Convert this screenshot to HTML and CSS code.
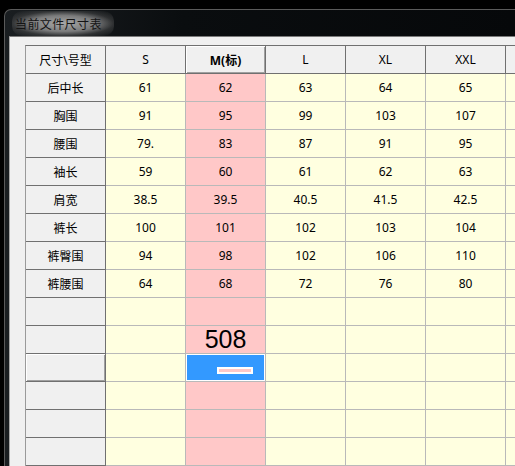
FILE: index.html
```html
<!DOCTYPE html>
<html>
<head>
<meta charset="utf-8">
<link rel="stylesheet" href="styles.css">
</head>
<body>
<div class="window">
  <div class="titlebar"><span class="title">当前文件尺寸表</span></div>
  <div class="client">
    <div class="grid">
      <div class="c h">尺寸\号型</div><div class="c h">S</div><div class="c h hsel b">M(标)</div><div class="c h">L</div><div class="c h">XL</div><div class="c h">XXL</div><div class="c h"></div>

      <div class="c h">后中长</div><div class="c">61</div><div class="c m">62</div><div class="c">63</div><div class="c">64</div><div class="c">65</div><div class="c"></div>
      <div class="c h">胸围</div><div class="c">91</div><div class="c m">95</div><div class="c">99</div><div class="c">103</div><div class="c">107</div><div class="c"></div>
      <div class="c h">腰围</div><div class="c">79.</div><div class="c m">83</div><div class="c">87</div><div class="c">91</div><div class="c">95</div><div class="c"></div>
      <div class="c h">袖长</div><div class="c">59</div><div class="c m">60</div><div class="c">61</div><div class="c">62</div><div class="c">63</div><div class="c"></div>
      <div class="c h">肩宽</div><div class="c">38.5</div><div class="c m">39.5</div><div class="c">40.5</div><div class="c">41.5</div><div class="c">42.5</div><div class="c"></div>
      <div class="c h">裤长</div><div class="c">100</div><div class="c m">101</div><div class="c">102</div><div class="c">103</div><div class="c">104</div><div class="c"></div>
      <div class="c h">裤臀围</div><div class="c">94</div><div class="c m">98</div><div class="c">102</div><div class="c">106</div><div class="c">110</div><div class="c"></div>
      <div class="c h">裤腰围</div><div class="c">64</div><div class="c m">68</div><div class="c">72</div><div class="c">76</div><div class="c">80</div><div class="c"></div>

      <div class="c h"></div><div class="c"></div><div class="c m"></div><div class="c"></div><div class="c"></div><div class="c"></div><div class="c"></div>
      <div class="c h"></div><div class="c"></div><div class="c m big">508</div><div class="c"></div><div class="c"></div><div class="c"></div><div class="c"></div>
      <div class="c h hsel"></div><div class="c"></div><div class="c m cur"><span class="edit"></span></div><div class="c"></div><div class="c"></div><div class="c"></div><div class="c"></div>
      <div class="c h"></div><div class="c"></div><div class="c m"></div><div class="c"></div><div class="c"></div><div class="c"></div><div class="c"></div>
      <div class="c h"></div><div class="c"></div><div class="c m"></div><div class="c"></div><div class="c"></div><div class="c"></div><div class="c"></div>
      <div class="c h"></div><div class="c"></div><div class="c m"></div><div class="c"></div><div class="c"></div><div class="c"></div><div class="c"></div>
      <div class="c h"></div><div class="c"></div><div class="c m"></div><div class="c"></div><div class="c"></div><div class="c"></div><div class="c"></div>
    </div>
  </div>
</div>
</body>
</html>
```
FILE: styles.css
```css
html, body {
  margin: 0;
  padding: 0;
}
body {
  background: #000;
  width: 515px;
  height: 466px;
  overflow: hidden;
  font-family: "Noto Sans", "Noto Sans CJK SC", sans-serif;
  font-size: 12px;
  color: #000;
}
.window {
  margin: 9px 0 0 4px;
  border-top: 1px solid #5a5a5a;
  border-left: 1px solid #5a5a5a;
  border-top-left-radius: 7px;
  background: linear-gradient(90deg, #1a1e21 0%, #0a0d0f 35%, #06080a 100%);
  padding-left: 4px;
  height: 457px;
  box-sizing: border-box;
  overflow: hidden;
}
.titlebar {
  height: 26px;
  display: flex;
  align-items: center;
}
.title {
  font-family: "Noto Sans CJK SC", sans-serif;
  font-size: 12px;
  letter-spacing: 0.4px;
  color: #141414;
  padding: 4px 12px 4px 3px;
  margin-left: 3px;
  border-radius: 10px;
  background: radial-gradient(ellipse at center, rgba(175,175,175,0.95) 0%, rgba(140,140,140,0.85) 45%, rgba(90,90,90,0.4) 70%, rgba(40,40,40,0) 95%);
}
.client {
  border-top: 1px solid #7a7a7a;
  border-left: 1px solid #a8a8a8;
  background: #f0f0f0;
  height: 430px;
  padding: 8px 0 0 15px;
  overflow: hidden;
}
.grid {
  display: grid;
  grid-template-columns: repeat(7, 80px);
  grid-auto-rows: 28px;
  border-top: 1px solid #707070;
  border-left: 1px solid #9a9a9a;
  width: max-content;
}
.c {
  box-sizing: border-box;
  border-right: 1px solid #b9b9b9;
  border-bottom: 1px solid #b9b9b9;
  background: #ffffe0;
  display: flex;
  align-items: center;
  justify-content: center;
  white-space: nowrap;
}
.h {
  background: #f0f0f0;
  border-color: #707070;
}
.hsel {
  box-shadow: inset 1px 1px 0 #ffffff, inset -1px -1px 0 #a0a0a0;
}
.b {
  font-weight: bold;
}
.m {
  background: #ffc8c8;
}
.big {
  font-family: "Liberation Sans", sans-serif;
  font-size: 25px;
}
.cur {
  background: #3399ff;
  box-shadow: inset 0 0 0 1px #ffffff;
  justify-content: flex-end;
  align-items: flex-end;
  padding: 0 12px 7px 0;
}
.edit {
  display: block;
  width: 32px;
  height: 3px;
  border: 2px solid #ffffff;
  background: #ffc8c8;
}
```
